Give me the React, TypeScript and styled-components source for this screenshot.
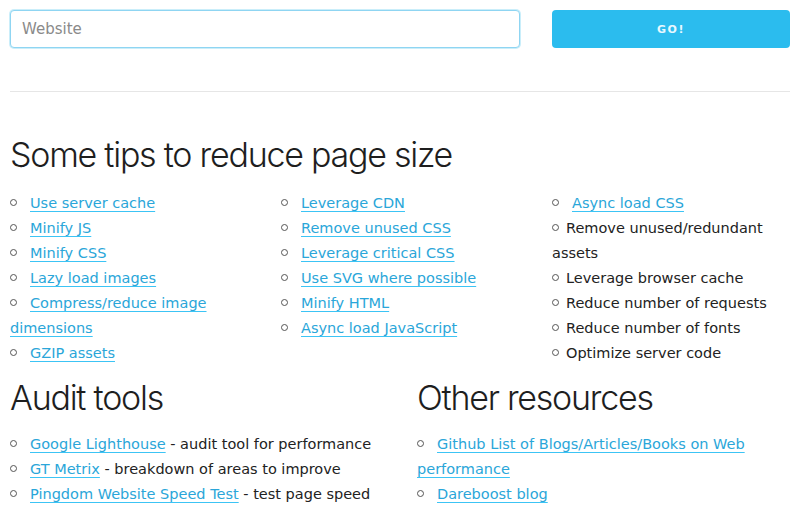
import React from 'react'
import styled, { createGlobalStyle } from 'styled-components'

const GlobalStyle = createGlobalStyle`
  html, body {
    margin: 0;
    padding: 0;
    background: #fff;
  }
  body {
    font-family: "DejaVu Sans", Verdana, sans-serif;
    color: #222;
  }
`

const tips1 = [
  'Use server cache',
  'Minify JS',
  'Minify CSS',
  'Lazy load images',
  'Compress/reduce image dimensions',
  'GZIP assets',
]

const tips2 = [
  'Leverage CDN',
  'Remove unused CSS',
  'Leverage critical CSS',
  'Use SVG where possible',
  'Minify HTML',
  'Async load JavaScript',
]

const tips3 = [
  'Remove unused/redundant assets',
  'Leverage browser cache',
  'Reduce number of requests',
  'Reduce number of fonts',
  'Optimize server code',
]

const audits = [
  { name: 'Google Lighthouse', desc: 'audit tool for performance' },
  { name: 'GT Metrix', desc: 'breakdown of areas to improve' },
  { name: 'Pingdom Website Speed Test', desc: 'test page speed' },
]

const resources = ['Github List of Blogs/Articles/Books on Web performance', 'Dareboost blog']

const App = () => {
  return (
    <Page>
      <GlobalStyle />
      <Form onSubmit={(e) => e.preventDefault()}>
        <Input placeholder='Website' />
        <GoButton type='submit'>GO!</GoButton>
      </Form>
      <Divider />

      <Title>Some tips to reduce page size</Title>
      <TipGrid>
        <List>
          {tips1.map((t) => (
            <Item key={t} link>
              <Link href='#'>{t}</Link>
            </Item>
          ))}
        </List>
        <List>
          {tips2.map((t) => (
            <Item key={t} link>
              <Link href='#'>{t}</Link>
            </Item>
          ))}
        </List>
        <List>
          <Item link>
            <Link href='#'>Async load CSS</Link>
          </Item>
          {tips3.map((t) => (
            <Item key={t}>{t}</Item>
          ))}
        </List>
      </TipGrid>

      <BottomGrid>
        <section>
          <Title>Audit tools</Title>
          <List>
            {audits.map((a) => (
              <Item key={a.name} link>
                <Link href='#'>{a.name}</Link> - {a.desc}
              </Item>
            ))}
          </List>
        </section>
        <section>
          <Title>Other resources</Title>
          <List>
            {resources.map((r) => (
              <Item key={r} link>
                <Link href='#'>{r}</Link>
              </Item>
            ))}
          </List>
        </section>
      </BottomGrid>
    </Page>
  )
}

export default App

const Page = styled.div`
  padding: 10px;
  width: 780px;
`

const Form = styled.form`
  display: flex;
  gap: 32px;
  margin: 0;
`

const Input = styled.input`
  width: 510px;
  height: 38px;
  box-sizing: border-box;
  border: 1px solid #8fd5f2;
  border-radius: 4px;
  padding: 0 11px;
  font-family: "DejaVu Sans", Verdana, sans-serif;
  font-size: 15px;
  color: #222;
  outline: none;
  box-shadow: 0 0 0 1px rgba(43, 187, 237, 0.25);
  &::placeholder {
    color: #8a8a8a;
  }
`

const GoButton = styled.button`
  width: 238px;
  height: 38px;
  border: none;
  border-radius: 4px;
  background: #2bbcee;
  color: #e8f8ff;
  font-family: "DejaVu Sans", Verdana, sans-serif;
  font-weight: 700;
  font-size: 11px;
  letter-spacing: 1.5px;
  cursor: pointer;
`

const Divider = styled.hr`
  margin: 43px 0 0;
  border: none;
  border-top: 1px solid #e6e6e6;
`

const Title = styled.h2`
  font-family: Inter, "Liberation Sans", sans-serif;
  font-weight: 300;
  font-size: 34px;
  letter-spacing: -1.25px;
  line-height: 44px;
  color: #1e1e1e;
  margin: 41px 0 14px;
  section & {
    margin: 0 0 12px;
  }
`

const TipGrid = styled.div`
  display: grid;
  grid-template-columns: 239px 239px 238px;
  column-gap: 32px;
`

const BottomGrid = styled.div`
  display: grid;
  grid-template-columns: 375px 373px;
  column-gap: 32px;
  margin-top: 10px;
`

const List = styled.ul`
  list-style: none;
  margin: 0;
  padding: 0;
`

const Item = styled.li<{ link?: boolean }>`
  font-size: 14.5px;
  line-height: 25px;
  color: #222;
  &::before {
    content: '';
    display: inline-block;
    width: 5px;
    height: 5px;
    border: 1.5px solid #555;
    border-radius: 50%;
    margin-right: ${(p) => (p.link ? '13px' : '7px')};
    vertical-align: 2px;
  }
`

const Link = styled.a`
  color: #2aa6d9;
  text-decoration: underline;
  text-decoration-color: #3cc4f5;
  text-underline-offset: 3px;
`
